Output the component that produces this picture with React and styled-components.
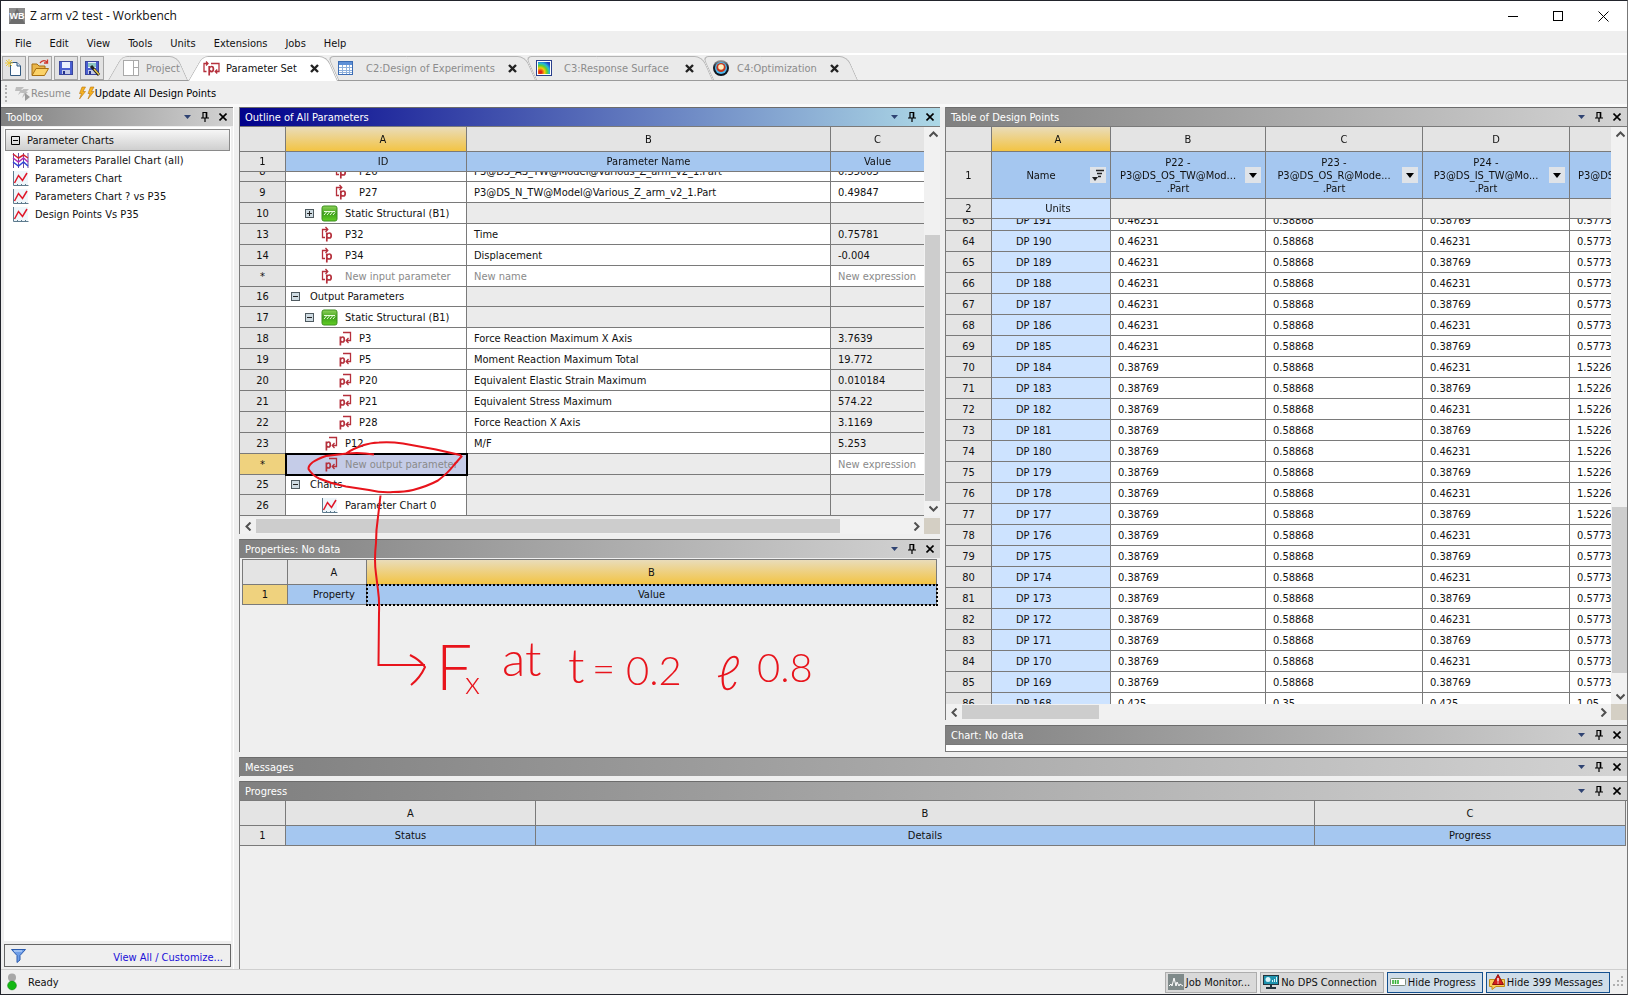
import React from 'react';
import styled, { createGlobalStyle } from 'styled-components';

const LINE = '#7a7a7a';
const FONT = '"DejaVu Sans Condensed", "DejaVu Sans", sans-serif';

const outlineRows = [
  { no: '8', level: 2, icon: 'in', id: 'P26', name: 'P3@DS_AS_TW@Model@Various_Z_arm_v2_1.Part', value: '0.55005' },
  { no: '9', level: 2, icon: 'in', id: 'P27', name: 'P3@DS_N_TW@Model@Various_Z_arm_v2_1.Part', value: '0.49847' },
  { no: '10', level: 1, box: '+', icon: 'solid', id: 'Static Structural (B1)', group: true },
  { no: '13', level: 1, icon: 'in', id: 'P32', name: 'Time', value: '0.75781', locked: true },
  { no: '14', level: 1, icon: 'in', id: 'P34', name: 'Displacement', value: '-0.004', locked: true },
  { no: '*', level: 1, icon: 'in', id: 'New input parameter', name: 'New name', value: 'New expression', dim: true },
  { no: '16', level: 0, box: '-', id: 'Output Parameters', group: true, short: true },
  { no: '17', level: 1, box: '-', icon: 'solid', id: 'Static Structural (B1)', group: true },
  { no: '18', level: 2, icon: 'out', id: 'P3', name: 'Force Reaction Maximum X Axis', value: '3.7639', locked: true },
  { no: '19', level: 2, icon: 'out', id: 'P5', name: 'Moment Reaction Maximum Total', value: '19.772', locked: true },
  { no: '20', level: 2, icon: 'out', id: 'P20', name: 'Equivalent Elastic Strain Maximum', value: '0.010184', locked: true },
  { no: '21', level: 2, icon: 'out', id: 'P21', name: 'Equivalent Stress Maximum', value: '574.22', locked: true },
  { no: '22', level: 2, icon: 'out', id: 'P28', name: 'Force Reaction X Axis', value: '3.1169', locked: true },
  { no: '23', level: 1, icon: 'out', id: 'P12', name: 'M/F', value: '5.253', locked: true },
  { no: '*', level: 1, icon: 'out', id: 'New output parameter', value: 'New expression', dim: true, selected: true },
  { no: '25', level: 0, box: '-', id: 'Charts', group: true, short: true },
  { no: '26', level: 1, icon: 'chart', id: 'Parameter Chart 0', group: true }
];

const designRows = [];
for (let i = 0; i < 23; i++) {
  const early = i < 7;
  designRows.push({
    no: 63 + i,
    name: 'DP ' + (191 - i),
    b: early ? '0.46231' : '0.38769',
    c: '0.58868',
    d: i % 2 === 0 ? '0.38769' : '0.46231',
    e: i < 7 || i > 14 ? '0.57735' : '1.52265'
  });
}
designRows.push({ no: 86, name: 'DP 168', b: '0.425', c: '0.35', d: '0.425', e: '1.05' });

const filters = ['P22 -|P3@DS_OS_TW@Mod...|.Part', 'P23 -|P3@DS_OS_R@Mode...|.Part', 'P24 -|P3@DS_IS_TW@Mo...|.Part'];

/* ---------- icons ---------- */

const PIn = () => (
  <svg width="17" height="17" viewBox="0 0 17 17" fill="none" stroke="#b5303c">
    <path d="M4 11.5H1.5V3.5H6M4.5 1L6.8 3.5L4.5 6" strokeWidth="1.3" />
    <path d="M5.8 6.5V15.5M5.8 9Q6.5 7 8.3 7Q10.2 7 10.2 9.5Q10.2 12 8.3 12Q6.6 12 5.8 10.6" strokeWidth="1.7" />
  </svg>
);

const POut = () => (
  <svg width="17" height="17" viewBox="0 0 17 17" fill="none" stroke="#b5303c">
    <path d="M5.4 6.5V15.5M5.4 9Q6 7 7.6 7Q9.3 7 9.3 9.5Q9.3 12 7.6 12Q6.2 12 5.4 10.6" strokeWidth="1.7" />
    <path d="M8 2.5H15.5V10.5H11.5M13.5 8L11.2 10.5L13.5 13" strokeWidth="1.3" />
  </svg>
);

const PSet = () => (
  <svg width="17" height="17" viewBox="0 0 17 17" fill="none" stroke="#b5303c">
    <path d="M3.5 11.5H1V3.5H4.5M3 1.5L5 3.5L3 5.5M8 3.5H16V11.5H12.5M14.2 9.5L12.2 11.5L14.2 13.5" strokeWidth="1.3" />
    <path d="M6.2 6V15.5M6.2 8.5Q7 6.5 8.6 6.5Q10.4 6.5 10.4 9Q10.4 11.6 8.6 11.6Q7 11.6 6.2 10" strokeWidth="1.7" />
  </svg>
);

const ChartIcon = () => (
  <svg width="17" height="17" viewBox="0 0 17 17" fill="none">
    <rect x="1" y="1" width="15" height="14" fill="#eef6fb" />
    <path d="M1.5 1V15.5H16.5M5.5 14V16M9.5 14V16M13.5 14V16" stroke="#5e7b8e" />
    <path d="M2.5 13L6.5 5.5L10.5 10.5L15 3" stroke="#e0182a" strokeWidth="1.5" />
  </svg>
);

const ParallelIcon = () => (
  <svg width="17" height="17" viewBox="0 0 17 17" fill="none">
    <path d="M1.5 1V16M6.5 1V16M11.5 1V16M16 1V16" stroke="#6b4a9c" />
    <path d="M1 2L6.500 6L11.500 3L16 6" stroke="#d6202f" strokeWidth="1.5" />
    <path d="M1 6L6.500 10L11.500 6L16 10" stroke="#b02bb4" strokeWidth="1.5" />
    <path d="M1 10L6.500 14L11.500 10L16 14" stroke="#2d45d8" strokeWidth="1.5" />
  </svg>
);

const SolidIcon = () => (
  <svg width="17" height="17" viewBox="0 0 17 17">
    <defs>
      <linearGradient id="green" x1="0" y1="0" x2="0" y2="1">
        <stop offset="0" stopColor="#8fd45a" />
        <stop offset="0.5" stopColor="#3fa01c" />
        <stop offset="1" stopColor="#62d024" />
      </linearGradient>
    </defs>
    <rect x="1" y="1" width="15" height="15" rx="2" fill="url(#green)" stroke="#3d8f1e" />
    <path d="M3 6.500H14M3 10L5.500 7M6 10L8.500 7M9 10L11.500 7M12 10L14 7.500" stroke="#eaffdc" fill="none" />
  </svg>
);

const NewIcon = () => (
  <svg width="20" height="20" viewBox="0 0 20 20">
    <path d="M6.500 4.500H13L16.500 8V17.500H6.500Z" fill="#fbfdff" stroke="#31587f" />
    <path d="M13 4.500V8H16.500" fill="#cfe0f2" stroke="#31587f" />
    <path d="M5 1V9M1 5H9M2 2L8 8M8 2L2 8" stroke="#ecc93c" />
  </svg>
);

const OpenIcon = () => (
  <svg width="20" height="20" viewBox="0 0 20 20">
    <path d="M2 17V6H7L9 8H15V11" fill="#e9b64a" stroke="#a86f10" />
    <path d="M2 17.500L6 10.500H18.500L14.500 17.500Z" fill="#fbd267" stroke="#a86f10" />
    <path d="M10 5Q13 1 17 4M17.500 1.500V5H14" fill="none" stroke="#d0382c" strokeWidth="1.3" />
  </svg>
);

const SaveIcon = ({ as }) => (
  <svg width="20" height="20" viewBox="0 0 20 20">
    <rect x="3.500" y="3.500" width="13" height="13" fill="#4a5fd0" stroke="#3a469c" />
    <rect x="6" y="4" width="8" height="6" fill="#e9effd" />
    <rect x="6" y="12" width="8" height="4" fill="#c4cbe6" />
    <rect x="7" y="13" width="2" height="3" fill="#24308c" />
    {as && <path d="M6 6H14M6 8H14" stroke="#2c9d8a" />}
    {as && <path d="M9 8L17 17" stroke="#222" strokeWidth="3" />}
    {as && <path d="M12 11L17 16.500" stroke="#e8c84a" strokeWidth="1.500" />}
  </svg>
);

const ProjectIcon = () => (
  <svg width="17" height="17" viewBox="0 0 17 17" fill="#fff" stroke="#a9a9a9">
    <rect x="0.500" y="0.500" width="15" height="15" />
    <path d="M10.500 0.500V15.500M10.500 7.500H15.500" />
  </svg>
);

const GridIcon = () => (
  <svg width="16" height="16" viewBox="0 0 16 16">
    <rect x="0.500" y="1.500" width="14" height="13" fill="#fff" stroke="#3b6cb4" />
    <rect x="1" y="2" width="13" height="3" fill="#5d8fd6" />
    <path d="M1 7.500H14M1 10.500H14M1 12.500H14M4.500 5V14M8.500 5V14M11.500 5V14" stroke="#8eb0dc" />
  </svg>
);

const SurfaceIcon = () => (
  <svg width="16" height="16" viewBox="0 0 16 16">
    <defs>
      <radialGradient id="heat" cx="0.2" cy="0.85" r="1">
        <stop offset="0.1" stopColor="#e3231b" />
        <stop offset="0.35" stopColor="#f9c70b" />
        <stop offset="0.55" stopColor="#5fd22c" />
        <stop offset="0.75" stopColor="#24b6dc" />
        <stop offset="1" stopColor="#1b3fc0" />
      </radialGradient>
    </defs>
    <rect x="0.500" y="0.500" width="15" height="15" fill="#fff" stroke="#2a3f8c" />
    <rect x="2" y="2" width="12" height="12" fill="url(#heat)" />
  </svg>
);

const TargetIcon = () => (
  <svg width="16" height="16" viewBox="0 0 16 16">
    <defs>
      <linearGradient id="ring" x1="0" y1="0" x2="0" y2="1">
        <stop offset="0" stopColor="#a9a9a9" />
        <stop offset="0.4" stopColor="#1b2430" />
        <stop offset="1" stopColor="#0a0f16" />
      </linearGradient>
    </defs>
    <circle cx="8" cy="8" r="8" fill="url(#ring)" />
    <circle cx="8" cy="8" r="6" fill="#4fb9ee" />
    <circle cx="8" cy="7.500" r="4.600" fill="#c8361c" />
    <circle cx="8" cy="7" r="2.800" fill="#fff0c0" />
  </svg>
);

const ResumeIcon = () => (
  <svg width="17" height="17" viewBox="0 0 17 17">
    <path d="M2 2H10L7 5H10L4 10L6 6H1ZM9 4H15L12 7L14 7L8 13L10 8H7Z" fill="#bdbdbd" />
    <path d="M11 8V16L16 12Z" fill="#9c9c9c" />
  </svg>
);

const BoltIcon = () => (
  <svg width="17" height="16" viewBox="0 0 17 16">
    <path d="M4 2H7.500L5 6.500H7.500L1.500 14L3.500 8.500H1.500ZM12.500 2H16L13.500 6.500H16L10 14L12 8.500H10Z" fill="#f6b21f" stroke="#b8740d" strokeWidth="0.600" />
  </svg>
);

const FilterIcon = () => (
  <svg width="15" height="14" viewBox="0 0 15 14">
    <path d="M0.500 0.500H14.500L9 6.500V11L6 13.500V6.500Z" fill="#6d9de8" stroke="#2c5cae" />
    <path d="M3 2H11" stroke="#d4e4fb" />
  </svg>
);

const LightIcon = () => (
  <svg width="10" height="18" viewBox="0 0 10 18">
    <circle cx="5" cy="4.500" r="4" fill="#a7a7a7" />
    <circle cx="5" cy="12.500" r="4.400" fill="#12b812" stroke="#0a7c0a" strokeWidth="0.500" />
  </svg>
);

const MonitorIcon = () => (
  <svg width="16" height="16" viewBox="0 0 16 16">
    <rect width="16" height="16" fill="#7f8a8a" />
    <path d="M1 12L3 10L4 12L6 4L8 12L9 8L11 12L12 10L15 12" fill="none" stroke="#fff" />
  </svg>
);

const DpsIcon = () => (
  <svg width="16" height="16" viewBox="0 0 16 16">
    <rect x="0.500" y="1.500" width="15" height="9" fill="#1f93ae" stroke="#23343d" />
    <circle cx="5" cy="5.500" r="2.500" fill="#d9f4fa" />
    <path d="M9.500 8V6M11.500 8V5M13.500 8V3" stroke="#d9f4fa" />
    <path d="M8 11V13M3 14H13" stroke="#23343d" strokeWidth="2" />
  </svg>
);

const BarIcon = () => (
  <svg width="16" height="16" viewBox="0 0 16 16">
    <rect x="0.500" y="4.500" width="15" height="7" rx="1" fill="#fff" stroke="#7b8a7b" />
    <path d="M3 6V10M5.500 6V10M8 6V10" stroke="#31b031" strokeWidth="1.600" />
  </svg>
);

const WarnIcon = () => (
  <svg width="16" height="16" viewBox="0 0 16 16">
    <path d="M0.500 5.500H15.500V12.500H7L3 15.500V12.500H0.500Z" fill="#f8cf5a" stroke="#c28d14" />
    <path d="M9 0.500L14.500 10.500H3.500Z" fill="#d3201f" stroke="#8f100f" />
    <path d="M9 4V7.500M9 8.500V9.500" stroke="#fff" strokeWidth="1.400" />
  </svg>
);

const icons = { in: PIn, out: POut, chart: ChartIcon, solid: SolidIcon };

/* ---------- page ---------- */

class App extends React.Component {
  constructor(props) {
    super(props);
    this.outline = React.createRef();
    this.points = React.createRef();
  }

  componentDidMount() {
    this.outline.current.scrollTop = 11;
    this.points.current.scrollTop = 9;
  }

  renderTitle(title, opts = {}) {
    return (
      <PanelTitle $active={opts.active} $ruled={opts.ruled}>
        <PanelName>{title}</PanelName>
        <TitleButton aria-label="Menu">
          <svg width="7" height="4" viewBox="0 0 7 4"><path d="M0 0H7L3.500 4Z" fill="#2f4372" /></svg>
        </TitleButton>
        <TitleButton aria-label="Pin">
          <svg width="8" height="10" viewBox="0 0 8 10" fill="none" stroke="#000">
            <path d="M2 6V0.500H5.500V6M0 6H8M4 6V10" strokeWidth="1.200" />
            <path d="M5.500 0V6" strokeWidth="1.500" />
          </svg>
        </TitleButton>
        <TitleButton aria-label="Close">
          <svg width="8" height="8" viewBox="0 0 8 8"><path d="M0.500 0.500L7.500 7.500M7.500 0.500L0.500 7.500" stroke="#000" strokeWidth="1.600" /></svg>
        </TitleButton>
      </PanelTitle>
    );
  }

  renderArrow(label, d) {
    return (
      <ArrowButton aria-label={label}>
        <svg width="9" height="9" viewBox="0 0 9 9"><path d={d} fill="none" stroke="#505050" strokeWidth="2" /></svg>
      </ArrowButton>
    );
  }

  renderVertical(before, size, after) {
    return (
      <VBar>
        {this.renderArrow('Scroll up', 'M0.5 6.500L4.500 2.500L8.500 6.500')}
        <Track $grow={before} />
        <Thumb $grow={size} />
        <Track $grow={after} />
        {this.renderArrow('Scroll down', 'M0.5 2.500L4.500 6.500L8.500 2.500')}
      </VBar>
    );
  }

  renderHorizontal(size, after) {
    return (
      <HBar>
        {this.renderArrow('Scroll left', 'M6.500 0.500L2.500 4.500L6.500 8.500')}
        <Thumb $grow={size} />
        <Track $grow={after} />
        {this.renderArrow('Scroll right', 'M2.500 0.500L6.500 4.500L2.500 8.500')}
      </HBar>
    );
  }

  renderOutlineRow(row, index) {
    const Icon = icons[row.icon];
    const tone = row.group ? 'gray' : 'white';
    return (
      <tr key={index}>
        <NumCell $picked={row.selected} $short={row.short}>{row.no}</NumCell>
        <Cell $flush $selected={row.selected} $dim={row.dim} $short={row.short}>
          <TreeLine $level={row.level}>
            <BoxSlot $wide={!Icon}>
              {row.box && (
                <Expander aria-label="Toggle">
                  <svg width="9" height="9" viewBox="0 0 9 9" stroke="#222">
                    <rect x="0.500" y="0.500" width="8" height="8" fill="#cfdbe2" stroke="#4f5a60" />
                    <path d={row.box === '+' ? 'M2 4.500H7M4.500 2V7' : 'M2 4.500H7'} />
                  </svg>
                </Expander>
              )}
            </BoxSlot>
            {Icon && <IconSlot><Icon /></IconSlot>}
            <span>{row.id}</span>
          </TreeLine>
        </Cell>
        <Cell $tone={row.selected ? 'gray' : tone} $dim={row.dim} $short={row.short}>{row.name}</Cell>
        <Cell $tone={row.locked ? 'gray' : tone} $dim={row.dim} $short={row.short} $last>{row.value}</Cell>
      </tr>
    );
  }

  render() {
    return (
      <Window>
        <GlobalStyle />
        <TitleBar>
          <svg width="16" height="16" viewBox="0 0 16 16">
            <rect width="16" height="16" fill="#8b8b8b" />
            <path d="M0 16L8 0L16 16Z" fill="#6d6d6d" />
            <text x="8" y="11" textAnchor="middle" fontFamily="Liberation Sans" fontWeight="bold" fontSize="9" fill="#fff">WB</text>
          </svg>
          <WindowName>Z arm v2 test - Workbench</WindowName>
          <WindowButton aria-label="Minimize"><svg width="11" height="11"><path d="M0 5.500H10" stroke="#000" /></svg></WindowButton>
          <WindowButton aria-label="Maximize"><svg width="11" height="11"><rect x="0.500" y="0.500" width="9" height="9" fill="none" stroke="#000" /></svg></WindowButton>
          <WindowButton aria-label="Close"><svg width="11" height="11"><path d="M0.500 0.500L10.500 10.500M10.500 0.500L0.500 10.500" stroke="#000" /></svg></WindowButton>
        </TitleBar>
        <MenuBar>
          {['File', 'Edit', 'View', 'Tools', 'Units', 'Extensions', 'Jobs', 'Help'].map(item => <MenuItem key={item}>{item}</MenuItem>)}
        </MenuBar>
        <TabBar>
          <IconButton aria-label="New"><NewIcon /></IconButton>
          <IconButton aria-label="Open"><OpenIcon /></IconButton>
          <IconButton aria-label="Save"><SaveIcon /></IconButton>
          <IconButton aria-label="Save as"><SaveIcon as /></IconButton>
          <Tabs>
            <Tab $width={80} $start $first><ProjectIcon /><TabName $pad={6}>Project</TabName></Tab>
            <Tab $width={150} $start $active><PSet /><TabName $pad={6}>Parameter Set</TabName><CloseTab /></Tab>
            <Tab $width={198}><GridIcon /><TabName $pad={12}>C2:Design of Experiments</TabName><CloseTab /></Tab>
            <Tab $width={177}><SurfaceIcon /><TabName $pad={12}>C3:Response Surface</TabName><CloseTab /></Tab>
            <Tab $width={145}><TargetIcon /><TabName $pad={8}>C4:Optimization</TabName><CloseTab /></Tab>
          </Tabs>
        </TabBar>
        <ToolBar>
          <Grip />
          <ToolButton $dim><ResumeIcon />Resume</ToolButton>
          <ToolButton><BoltIcon />Update All Design Points</ToolButton>
        </ToolBar>
        <Main>
          <Toolbox>
            {this.renderTitle('Toolbox')}
            <ToolList>
              <Category>
                <svg width="9" height="9" viewBox="0 0 9 9"><path d="M0.500 0.500H8.500V8.500H0.500ZM2 4.500H7" fill="none" stroke="#000" /></svg>
                Parameter Charts
              </Category>
              <ToolItem><ParallelIcon />Parameters Parallel Chart (all)</ToolItem>
              <ToolItem><ChartIcon />Parameters Chart</ToolItem>
              <ToolItem><ChartIcon />Parameters Chart ? vs P35</ToolItem>
              <ToolItem><ChartIcon />Design Points Vs P35</ToolItem>
            </ToolList>
            <FilterBox>
              <FilterIcon />
              <a href="#customize">View All / Customize...</a>
            </FilterBox>
          </Toolbox>

          <Work>
            <Columns>
              <Column>
                <Panel $grow>
                  {this.renderTitle('Outline of All Parameters', { active: true, ruled: true })}
                  <ScrollFrame>
                    <Viewport ref={this.outline}>
                      <Table>
                        <colgroup>
                          <Col $w={46} /><Col $w={181} /><Col $w={364} /><Col />
                        </colgroup>
                        <thead>
                          <tr>
                            <NumHead $tall /><Letter $gold $shift>A</Letter><Letter>B</Letter><Letter $last>C</Letter>
                          </tr>
                          <tr>
                            <NumHead>1</NumHead><Head $shift>ID</Head><Head>Parameter Name</Head><Head $last>Value</Head>
                          </tr>
                        </thead>
                        <tbody>{outlineRows.map(this.renderOutlineRow)}</tbody>
                      </Table>
                    </Viewport>
                    {this.renderVertical(93, 266, 0)}
                    <HBarBox>{this.renderHorizontal(586, 68)}</HBarBox>
                    <Corner />
                  </ScrollFrame>
                </Panel>
                <Panel $height={213}>
                  {this.renderTitle('Properties: No data')}
                  <PropertiesBody>
                    <Table $boxed>
                      <colgroup>
                        <Col $w={45} /><Col $w={79} /><Col />
                      </colgroup>
                      <thead>
                        <tr><NumHead $tall /><Letter $shift>A</Letter><Letter $gold>B</Letter></tr>
                        <tr><NumHead $picked>1</NumHead><Head $shift>Property</Head><Head $dotted>Value</Head></tr>
                      </thead>
                    </Table>
                  </PropertiesBody>
                </Panel>
              </Column>

              <Column>
                <Panel $grow>
                  {this.renderTitle('Table of Design Points', { ruled: true })}
                  <ScrollFrame>
                    <Viewport ref={this.points}>
                      <Table>
                        <colgroup>
                          <Col $w={46} /><Col $w={119} /><Col $w={155} /><Col $w={157} /><Col $w={147} /><Col />
                        </colgroup>
                        <thead>
                          <tr>
                            <NumHead $tall /><Letter $gold $shift>A</Letter><Letter>B</Letter><Letter>C</Letter><Letter>D</Letter><Letter $last />
                          </tr>
                          <tr>
                            <NumHead>1</NumHead>
                            <Head $high>
                              <HeadLine>
                                <HeadText>Name</HeadText>
                                <DropButton aria-label="Sort">
                                  <svg width="12" height="12" viewBox="0 0 12 12"><path d="M4 1.500H12M5 4.500H10M6 7.500H9" stroke="#222" strokeWidth="1.500" /><path d="M0 8H6L3 12Z" fill="#222" /></svg>
                                </DropButton>
                              </HeadLine>
                            </Head>
                            {filters.map(f => (
                              <Head $high key={f}>
                                <HeadLine>
                                  <HeadText>{f.split('|').map(part => <div key={part}>{part}</div>)}</HeadText>
                                  <DropButton aria-label="Filter"><svg width="8" height="5"><path d="M0 0H8L4 5Z" /></svg></DropButton>
                                </HeadLine>
                              </Head>
                            ))}
                            <Head $high $last $cut>P3@DS_IS_R</Head>
                          </tr>
                          <tr>
                            <NumHead>2</NumHead><Head $pale $shift>Units</Head><Head $blank /><Head $blank /><Head $blank /><Head $blank $last />
                          </tr>
                        </thead>
                        <tbody>
                          {designRows.map(row => (
                            <tr key={row.no}>
                              <NumCell>{row.no}</NumCell>
                              <Cell $tone="blue">{row.name}</Cell>
                              <Cell>{row.b}</Cell>
                              <Cell>{row.c}</Cell>
                              <Cell>{row.d}</Cell>
                              <Cell $last>{row.e}</Cell>
                            </tr>
                          ))}
                        </tbody>
                      </Table>
                    </Viewport>
                    {this.renderVertical(364, 165, 16)}
                    {this.renderHorizontal(136, 493)}
                    <Corner />
                  </ScrollFrame>
                </Panel>
                <Panel>
                  {this.renderTitle('Chart: No data', { ruled: true })}
                  <ChartBody />
                </Panel>
              </Column>

              <Ink viewBox="0 0 701 645" aria-hidden="true">
                <g transform="translate(-239 -107)">
                  <path d="M374 454.500Q360 452 347 453.500L326 456Q308 462 308.500 469Q312 475 319 478.500Q332 484 346 486.500L369 490Q382 493 393 492Q405 492 413 490Q428 486 438 480.500Q448 473 454 465L461.500 456.500L460 455L436 449.500L403 443.500Q390 441.500 379 442.500Q370 443 364 445Q352 449 346 453.500" />
                  <path d="M380.500 495.500Q379 508 378 517Q376 530 376 543Q374 560 376 574L378 590Q379.500 600 379 613L378.500 665H425M410 655Q420 660 425 667Q420 678 411 685" />
                  <text x="436" y="690" fontSize="64">F</text>
                  <text x="465" y="694" fontSize="32">x</text>
                  <text x="502" y="676" fontSize="48">at</text>
                  <text x="568" y="683" fontSize="48">t</text>
                  <text x="592" y="683" fontSize="40">=</text>
                  <text x="626" y="685" fontSize="40">0.2</text>
                  <text x="716" y="690" fontSize="48">ℓ</text>
                  <text x="757" y="682" fontSize="40">0.8</text>
                </g>
              </Ink>
            </Columns>
            <Messages>{this.renderTitle('Messages')}</Messages>
            <Panel $height={188}>
              {this.renderTitle('Progress', { ruled: true })}
              <ProgressBody>
                <Table>
                  <colgroup>
                    <Col $w={46} /><Col $w={250} /><Col /><Col $w={311} />
                  </colgroup>
                  <thead>
                    <tr><NumHead $tall /><Letter>A</Letter><Letter>B</Letter><Letter>C</Letter></tr>
                    <tr><NumHead>1</NumHead><Head>Status</Head><Head>Details</Head><Head>Progress</Head></tr>
                  </thead>
                </Table>
              </ProgressBody>
            </Panel>
          </Work>
        </Main>
        <StatusBar>
          <LightIcon />
          <StatusText>Ready</StatusText>
          <StatusButton><MonitorIcon />Job Monitor...</StatusButton>
          <StatusButton><DpsIcon />No DPS Connection</StatusButton>
          <StatusButton $on><BarIcon />Hide Progress</StatusButton>
          <StatusButton $on><WarnIcon />Hide 399 Messages</StatusButton>
          <svg width="12" height="12" viewBox="0 0 12 12" fill="#b0b0b0">
            <path d="M8 0h2v2h-2zM4 4h2v2h-2zM8 4h2v2h-2zM0 8h2v2h-2zM4 8h2v2h-2zM8 8h2v2h-2z" />
          </svg>
        </StatusBar>
      </Window>
    );
  }
}

const CloseTab = () => (
  <TitleButton aria-label="Close tab">
    <svg width="9" height="9" viewBox="0 0 9 9"><path d="M1 1L8 8M8 1L1 8" stroke="#222" strokeWidth="2.400" /></svg>
  </TitleButton>
);

const GlobalStyle = createGlobalStyle`
  * {
    box-sizing: border-box;
  }
  body {
    margin: 0;
    background: #efefef;
  }
  body, button {
    font-family: ${FONT};
    font-size: 11px;
    line-height: 13px;
    color: #111;
  }
  button {
    background: none;
    border: 0;
    padding: 0;
  }
  svg {
    display: block;
    flex: none;
  }
`;
const Window = styled.div`
  display: flex;
  flex-direction: column;
  min-height: 100vh;
  border: 1px solid #22242c;
  border-right-color: #777;
`;
const TitleBar = styled.header`
  display: flex;
  align-items: center;
  height: 30px;
  padding: 0 1px 0 8px;
  background: #fff;
`;
const WindowName = styled.div`
  flex: 1;
  padding-left: 5px;
  font-family: "Open Sans", sans-serif;
  font-size: 12px;
  line-height: 16px;
`;
const WindowButton = styled.button`
  display: flex;
  align-items: center;
  justify-content: center;
  width: 45px;
  height: 28px;
`;
const MenuBar = styled.nav`
  display: flex;
  gap: 18px;
  height: 24px;
  padding: 2px 14px 0;
  border-bottom: 2px solid #fff;
`;
const MenuItem = styled.button``;
const TabBar = styled.div`
  display: flex;
  align-items: flex-end;
  gap: 2px;
  height: 26px;
  padding-left: 1px;
  border-bottom: 1px solid #9b9b9b;
`;
const IconButton = styled.button`
  display: flex;
  align-items: center;
  justify-content: center;
  width: 24px;
  height: 24px;
  border: 1px solid #a5a5a5;
  background: #e2e2e2;
`;
const Tabs = styled.div`
  display: flex;
  align-items: flex-end;
  margin-bottom: -1px;
  padding-left: 2px;
`;
const Tab = styled.div`
  position: relative;
  z-index: ${props => props.$active ? 2 : 0};
  display: flex;
  align-items: center;
  width: ${props => props.$width}px;
  height: ${props => props.$active ? 25 : 24}px;
  margin-bottom: ${props => props.$active ? 0 : 1}px;
  padding: 0 ${props => props.$first ? 0 : 15}px 0 ${props => props.$start ? 15 : 0}px;
  color: ${props => props.$active ? '#111' : '#8c8c8c'};
  > * {
    z-index: 1;
  }
  &::before, &::after {
    content: '';
    position: absolute;
    z-index: 0;
    top: 0;
    bottom: 0;
    background: ${props => props.$active ? '#fff' : '#eaeaea'};
    border-top: 1px solid #b4b4b4;
  }
  &::before {
    left: 0;
    right: 50%;
    border-left: 1px solid #b4b4b4;
    border-top-left-radius: 6px;
    transform: skewX(${props => props.$start ? -30 : 24}deg);
    transform-origin: bottom;
  }
  &::after {
    left: 40%;
    right: 0;
    border-right: 1px solid #b4b4b4;
    border-top-right-radius: 8px;
    transform: skewX(24deg);
    transform-origin: bottom;
  }
`;
const TabName = styled.span`
  flex: 1;
  padding-left: ${props => props.$pad}px;
  white-space: nowrap;
`;
const ToolBar = styled.div`
  display: flex;
  align-items: center;
  gap: 7px;
  height: 26px;
  padding: 1px 0 0 4px;
  border-bottom: 3px solid #f9f9f9;
`;
const Grip = styled.div`
  height: 17px;
  border-left: 2px dotted #b0b0b0;
`;
const ToolButton = styled.button`
  display: flex;
  align-items: center;
  color: ${props => props.$dim ? '#8c8c8c' : '#000'};
`;
const Main = styled.main`
  flex: 1;
  display: flex;
`;
const Toolbox = styled.aside`
  flex: none;
  display: flex;
  flex-direction: column;
  width: 233px;
  margin-right: 5px;
  border-right: 1px solid #fff;
`;
const PanelTitle = styled.div`
  flex: none;
  display: flex;
  align-items: center;
  height: ${props => props.$ruled ? 20 : 19}px;
  padding: 0 1px 0 5px;
  border-top: 1px solid #6c6c6c;
  border-bottom: ${props => props.$ruled ? '1px solid ' + LINE : 0};
  background: linear-gradient(to right, ${props => props.$active ? '#00008b, #add8e6' : '#808080, #d3d3d3'});
`;
const PanelName = styled.h2`
  flex: 1;
  margin: 0;
  font-size: 11px;
  font-weight: normal;
  color: #fff;
`;
const TitleButton = styled.button`
  display: flex;
  align-items: center;
  justify-content: center;
  width: 18px;
  height: 16px;
`;
const ToolList = styled.div`
  flex: 1;
  margin: 1px 2px 3px 3px;
  padding: 2px 1px;
  background: #fff;
`;
const Category = styled.button`
  display: flex;
  align-items: center;
  gap: 7px;
  width: 100%;
  height: 22px;
  padding: 0 5px;
  border: 1px solid #8a8a8a;
  background: linear-gradient(#f6f6f6, #cfcfcf);
`;
const ToolItem = styled.button`
  display: flex;
  align-items: center;
  gap: 6px;
  width: 100%;
  height: 18px;
  padding-left: 7px;
`;
const FilterBox = styled.div`
  display: flex;
  align-items: center;
  justify-content: space-between;
  height: 23px;
  margin: 0 2px 2px 3px;
  padding: 0 7px 0 6px;
  border: 1px solid #666;
  a {
    padding-top: 4px;
    color: #1a10d8;
    text-decoration: none;
  }
`;
const Work = styled.div`
  flex: 1;
  display: flex;
  flex-direction: column;
  min-width: 0;
`;
const Columns = styled.div`
  position: relative;
  flex: 1;
  display: grid;
  grid-template-columns: minmax(0, 701fr) minmax(0, 682fr);
  gap: 5px;
`;
const Column = styled.div`
  display: flex;
  flex-direction: column;
  gap: 5px;
`;
const Panel = styled.section`
  display: flex;
  flex-direction: column;
  flex: ${props => props.$grow ? '1 1 0' : 'none'};
  min-height: ${props => props.$height || 0}px;
  border-left: 1px solid ${LINE};
`;
const ScrollFrame = styled.div`
  flex: 1;
  display: grid;
  grid-template-columns: minmax(0, 1fr) 16px;
  grid-template-rows: minmax(0, 1fr) auto;
  min-height: 0;
`;
const Viewport = styled.div`
  overflow: hidden;
  min-height: 0;
`;
const VBar = styled.div`
  display: flex;
  flex-direction: column;
  padding-left: 1px;
  background: #f1f1f1;
`;
const HBarBox = styled.div`
  padding-top: 2px;
`;
const HBar = styled.div`
  display: flex;
  height: 16px;
  padding: 1px 0;
  background: #f1f1f1;
`;
const ArrowButton = styled.button`
  display: flex;
  align-items: center;
  justify-content: center;
  width: 16px;
  height: 15px;
`;
const Track = styled.div`
  flex: ${props => props.$grow} 1 0;
`;
const Thumb = styled(Track)`
  background: #cdcdcd;
`;
const Corner = styled.div`
  align-self: end;
  height: 16px;
  background: #d4cfc4;
`;
const Table = styled.table`
  width: 100%;
  table-layout: fixed;
  border-collapse: separate;
  border-spacing: 0;
  ${props => props.$boxed ? `border-left: 1px solid ${LINE}; border-top: 1px solid ${LINE};` : ''}
  thead {
    position: sticky;
    top: 0;
    z-index: 1;
  }
`;
const Col = styled.col`
  width: ${props => props.$w ? props.$w + 'px' : 'auto'};
`;
const NumHead = styled.th`
  height: ${props => props.$tall ? 25 : 20}px;
  padding: 0;
  border-right: 1px solid ${LINE};
  border-bottom: 1px solid ${LINE};
  background: ${props => props.$picked ? '#efd27e' : '#e4e4e4'};
  font-weight: normal;
`;
const Letter = styled(NumHead)`
  height: 25px;
  padding-left: ${props => props.$shift ? 14 : 0}px;
  border-right-width: ${props => props.$last ? 0 : 1}px;
  background: ${props => props.$gold ? 'linear-gradient(#e9dcba, #f3c444)' : '#e4e4e4'};
`;
const Head = styled(Letter)`
  height: ${props => props.$high ? 47 : 20}px;
  background: ${props => props.$blank ? '#ebebeb' : props.$pale ? '#cde3ff' : '#a5c7f0'};
  ${props => props.$dotted ? 'outline: 2px dotted #000; outline-offset: -1px;' : ''}
  ${props => props.$cut ? 'padding-left: 8px; text-align: left; overflow: hidden; white-space: nowrap;' : ''}
`;
const HeadLine = styled.div`
  display: flex;
  align-items: center;
  padding-right: 4px;
`;
const HeadText = styled.div`
  flex: 1;
  min-width: 0;
  white-space: nowrap;
`;
const DropButton = styled.button`
  display: flex;
  align-items: center;
  justify-content: center;
  width: 16px;
  height: 16px;
  background: #dfe3e8;
`;
const NumCell = styled.td`
  height: ${props => props.$short ? 20 : 21}px;
  padding: 0;
  border-right: 1px solid ${LINE};
  border-bottom: 1px solid ${LINE};
  background: ${props => props.$picked ? '#efd27e' : '#e4e4e4'};
  text-align: center;
`;
const tones = { white: '#fff', gray: '#ebebeb', blue: '#cde3ff' };
const Cell = styled(NumCell)`
  padding-left: ${props => props.$flush ? 0 : props.$tone === 'blue' ? 24 : 7}px;
  border-right-width: ${props => props.$last ? 0 : 1}px;
  background: ${props => props.$selected ? '#c5cce8' : tones[props.$tone || 'white']};
  color: ${props => props.$dim ? '#8a8a8a' : '#111'};
  text-align: left;
  white-space: nowrap;
  overflow: hidden;
  ${props => props.$selected ? 'outline: 2px solid #000; outline-offset: -1px;' : ''}
`;
const TreeLine = styled.div`
  display: flex;
  align-items: center;
  padding-left: ${props => 5 + props.$level * 14}px;
`;
const BoxSlot = styled.span`
  width: ${props => props.$wide ? 19 : 16}px;
`;
const Expander = styled.button`
  display: block;
`;
const IconSlot = styled.span`
  width: 24px;
`;
const PropertiesBody = styled.div`
  padding: 1px 3px 0 2px;
`;
const ProgressBody = styled.div`
  padding-right: 1px;
`;
const ChartBody = styled.div`
  height: 7px;
  background: #fff;
  border-bottom: 1px solid ${LINE};
`;
const Ink = styled.svg`
  position: absolute;
  z-index: 3;
  top: 0;
  left: 0;
  width: 701px;
  height: 645px;
  pointer-events: none;
  path {
    fill: none;
    stroke: #e8141c;
    stroke-width: 2;
  }
  text {
    fill: #e8141c;
    font-family: Lato, "DejaVu Sans", sans-serif;
    font-weight: 300;
  }
`;
const Messages = styled.div`
  margin: 5px 0 4px;
  padding-bottom: 1px;
  border-left: 1px solid ${LINE};
`;
const StatusBar = styled.footer`
  display: flex;
  align-items: center;
  gap: 3px;
  height: 25px;
  padding: 0 2px 0 6px;
  border-top: 1px solid #cfcfcf;
`;
const StatusText = styled.div`
  flex: 1;
  padding-left: 8px;
`;
const StatusButton = styled.button`
  display: flex;
  align-items: center;
  gap: 2px;
  height: 21px;
  padding: 0 6px 0 2px;
  border: 1px solid ${props => props.$on ? '#14508f' : '#adadad'};
  background: ${props => props.$on ? '#cfdde9' : '#d9d9d9'};
`;

export default App;
